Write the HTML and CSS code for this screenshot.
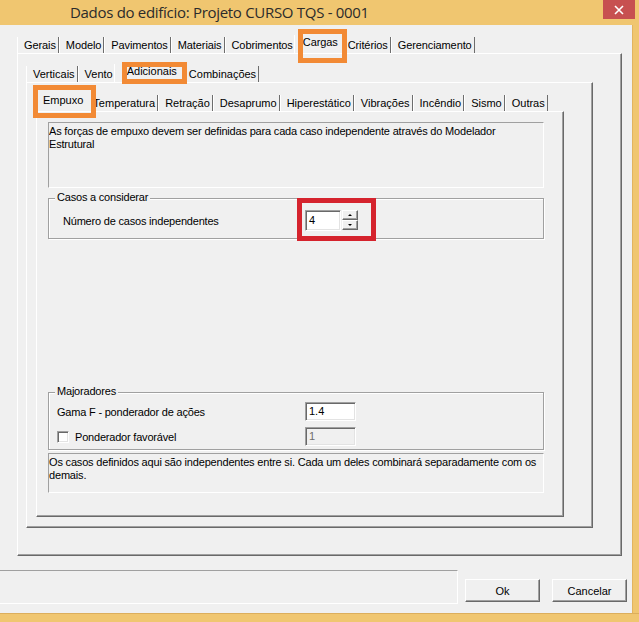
FILE: index.html
```html
<!DOCTYPE html>
<html lang="pt">
<head>
<meta charset="utf-8">
<title>Dados do edifício</title>
<link rel="stylesheet" href="styles.css">
</head>
<body>
<div class="window">
  <div class="titlebar">
    <span class="title">Dados do edifício: Projeto CURSO TQS - 0001</span>
    <span class="close"><svg width="10" height="10" viewBox="0 0 10 10"><path d="M1 1L9 9M9 1L1 9" stroke="#fff" stroke-width="1.6" fill="none"/></svg></span>
  </div>
  <div class="frame">
    <div class="client">
      <div class="tabctl outer">
        <div class="tabrow">
          <span class="tab">Gerais</span>
          <span class="tab">Modelo</span>
          <span class="tab">Pavimentos</span>
          <span class="tab">Materiais</span>
          <span class="tab">Cobrimentos</span>
          <span class="tab sel hl-cargas">Cargas</span>
          <span class="tab">Critérios</span>
          <span class="tab">Gerenciamento</span>
        </div>
        <div class="panel">
          <div class="tabctl mid">
            <div class="tabrow">
              <span class="tab">Verticais</span>
              <span class="tab">Vento</span>
              <span class="tab sel hl-adic">Adicionais</span>
              <span class="tab">Combinações</span>
            </div>
            <div class="panel">
              <div class="tabctl inner">
                <div class="tabrow">
                  <span class="tab sel first hl-empuxo">Empuxo</span>
                  <span class="tab">Temperatura</span>
                  <span class="tab">Retração</span>
                  <span class="tab">Desaprumo</span>
                  <span class="tab">Hiperestático</span>
                  <span class="tab">Vibrações</span>
                  <span class="tab">Incêndio</span>
                  <span class="tab">Sismo</span>
                  <span class="tab">Outras</span>
                </div>
                <div class="panel">
                  <div class="note note1">As forças de empuxo devem ser definidas para cada caso independente através do Modelador<br>Estrutural</div>
                  <div class="group g1">
                    <div class="cap">Casos a considerar</div>
                    <div class="row">
                      <span class="lbl lbl1">Número de casos independentes</span>
                      <span class="redmark">
                        <span class="spin">
                          <span class="edit e-spin">4</span>
                          <span class="spinbtns">
                            <span class="sb up"></span>
                            <span class="sb down"></span>
                          </span>
                        </span>
                      </span>
                    </div>
                  </div>
                  <div class="group g2">
                    <div class="cap">Majoradores</div>
                    <div class="row r1">
                      <span class="lbl lbl2">Gama F - ponderador de ações</span>
                      <span class="edit e-num">1.4</span>
                    </div>
                    <div class="row r2">
                      <span class="check"></span>
                      <span class="lbl lbl3">Ponderador favorável</span>
                      <span class="edit e-num disabled">1</span>
                    </div>
                  </div>
                  <div class="note note2">Os casos definidos aqui são independentes entre si. Cada um deles combinará separadamente com os<br>demais.</div>
                </div>
              </div>
            </div>
          </div>
        </div>
      </div>
      <div class="bottombar">
        <div class="status"></div>
        <button class="btn ok">Ok</button>
        <button class="btn cancel">Cancelar</button>
      </div>
    </div>
    <div class="rborder"></div>
  </div>
  <div class="bborder"></div>
</div>
</body>
</html>
```

FILE: styles.css
```css
* { box-sizing: border-box; }
html, body { margin: 0; padding: 0; }
body {
  width: 639px;
  height: 622px;
  overflow: hidden;
  background: #f0c670;
  font-family: "Liberation Sans", Arial, sans-serif;
  font-size: 11px;
  color: #000;
}
.window { display: flex; flex-direction: column; width: 639px; height: 622px; }

.titlebar { height: 25px; flex: none; display: flex; align-items: flex-start; background: #f0c670; }
.title {
  font-family: "Open Sans", "Noto Sans", sans-serif;
  font-size: 15px;
  line-height: 24px;
  padding-left: 70px;
  color: #2b2b2b;
  letter-spacing: -0.3px;
}
.close {
  margin-left: auto;
  margin-right: 4px;
  width: 32px;
  height: 19px;
  background: #c75050;
  display: flex;
  align-items: center;
  justify-content: center;
}

.frame { display: flex; height: 588px; flex: none; }
.client { width: 632px; flex: none; background: #f0f0f0; display: flex; flex-direction: column; }
.rborder { flex: 1; background: #f0c670; border-left: 1px solid #e2b460; }
.bborder { flex: 1; background: #f0c670; border-top: 1px solid #dcae5c; }

/* tab controls */
.tabctl { display: flex; flex-direction: column; }
.tabctl.outer { margin: 10px 0 0 17px; width: 605px; }
.tabctl.mid { width: 567px; }
.tabctl.inner { width: 528px; }

.tabrow { display: flex; align-items: flex-end; height: 18px; }
.outer > .tabrow .tab { letter-spacing: -0.1px; }
.tab {
  height: 16px;
  line-height: 16px;
  padding: 0 2px 0 6px;
  border-left: 1px solid #fff;
  border-right: 1px solid #6d6d6d;
  white-space: nowrap;
}
.tab.sel {
  position: relative;
  height: 18px;
  line-height: 15px;
  margin: 0 -2px;
  padding: 0 4px 3px 8px;
  border-right-color: transparent;
  background: #f0f0f0;
  z-index: 1;
}
.tab.sel::after {
  content: "";
  position: absolute;
  border: 5px solid #f28a35;
}
.hl-cargas::after { left: 3px; right: -5px; top: -6px; bottom: -10px; }
.tab.hl-adic { padding: 0 6px 3px 12px; }
.hl-adic::after { left: 7px; right: -4px; top: -2px; bottom: -2px; }
.hl-empuxo::after { left: -2px; right: -9px; top: -8px; bottom: -7px; }

.panel {
  border: 1px solid;
  border-color: #fff #696969 #696969 #fff;
  box-shadow: inset -1px -1px 0 #a0a0a0;
}
.outer > .panel { height: 503px; padding: 10px 0 0 8px; }
.mid > .panel { height: 446px; padding: 10px 0 0 9px; }
.inner > .panel { height: 406px; padding: 10px 0 0 11px; }

/* content */
.note {
  width: 496px;
  border: 1px solid;
  border-color: #a0a0a0 #fff #fff #a0a0a0;
  padding: 2px 0 0 0;
  line-height: 13px;
  white-space: nowrap;
  overflow: hidden;
  letter-spacing: -0.18px;
}
.note1 { height: 66px; }
.note2 { height: 40px; margin-top: 3px; }

.group {
  width: 496px;
  border: 1px solid #a0a0a0;
  box-shadow: inset 1px 1px 0 #fff, 1px 1px 0 #fff;
}
.cap {
  width: fit-content;
  margin: -8px 0 0 6px;
  padding: 0 2px;
  background: #f0f0f0;
  line-height: 13px;
  letter-spacing: -0.2px;
}
.row { display: flex; align-items: center; }
.lbl { white-space: nowrap; letter-spacing: -0.2px; }

.g1 { margin-top: 10px; padding-bottom: 7px; }
.g1 .row { margin-top: 6px; height: 21px; padding-left: 14px; }
.lbl1 { width: 242px; }

.g2 { margin-top: 153px; padding-bottom: 3px; }
.g2 .row { height: 19px; padding-left: 8px; }
.g2 .r1 { margin-top: 4px; }
.g2 .r2 { margin-top: 6px; }
.lbl2 { width: 248px; }
.lbl3 { width: 230px; margin-left: 6px; }

.edit {
  display: block;
  background: #fff;
  border: 1px solid;
  border-color: #a0a0a0 #fff #fff #a0a0a0;
  box-shadow: inset 1px 1px 0 #696969, inset -1px -1px 0 #e3e3e3;
  padding-left: 3px;
}
.e-spin { width: 36px; height: 21px; line-height: 19px; }
.e-num { width: 51px; height: 19px; line-height: 17px; }
.edit.disabled { background: #f0f0f0; color: #6d6d6d; }

.check {
  width: 12px;
  height: 12px;
  background: #fff;
  border: 1px solid;
  border-color: #a0a0a0 #fff #fff #a0a0a0;
  box-shadow: inset 1px 1px 0 #696969, inset -1px -1px 0 #e3e3e3;
}

.redmark {
  display: flex;
  border: 5px solid #d5232d;
  padding: 7px 13px 5px 3px;
  margin: -12px -18px -10px -8px;
  position: relative;
  z-index: 1;
}
.spin { display: flex; gap: 1px; height: 21px; }
.spinbtns { display: flex; flex-direction: column; width: 16px; height: 20px; }
.sb {
  height: 10px;
  border: 1px solid;
  border-color: #fff #696969 #696969 #fff;
  box-shadow: inset -1px -1px 0 #a0a0a0;
  background: #f0f0f0;
  display: flex;
  align-items: center;
  justify-content: center;
}
.sb::before {
  content: "";
  width: 0;
  height: 0;
  border-left: 2px solid transparent;
  border-right: 2px solid transparent;
}
.up::before { border-bottom: 2px solid #000; }
.down::before { border-top: 2px solid #000; }

/* bottom */
.bottombar { display: flex; align-items: flex-start; margin-top: 14px; height: 34px; }
.status {
  width: 458px;
  height: 34px;
  border-top: 1px solid #a0a0a0;
  border-right: 1px solid #fff;
  border-bottom: 1px solid #fff;
}
.btn {
  width: 75px;
  height: 23px;
  margin-top: 9px;
  padding: 0;
  font-family: "Liberation Sans", Arial, sans-serif;
  font-size: 11px;
  color: #000;
  background: #f0f0f0;
  border: 1px solid;
  border-color: #fff #696969 #696969 #fff;
  box-shadow: inset -1px -1px 0 #a0a0a0;
}
.ok { margin-left: 7px; }
.cancel { margin-left: 12px; }
```
